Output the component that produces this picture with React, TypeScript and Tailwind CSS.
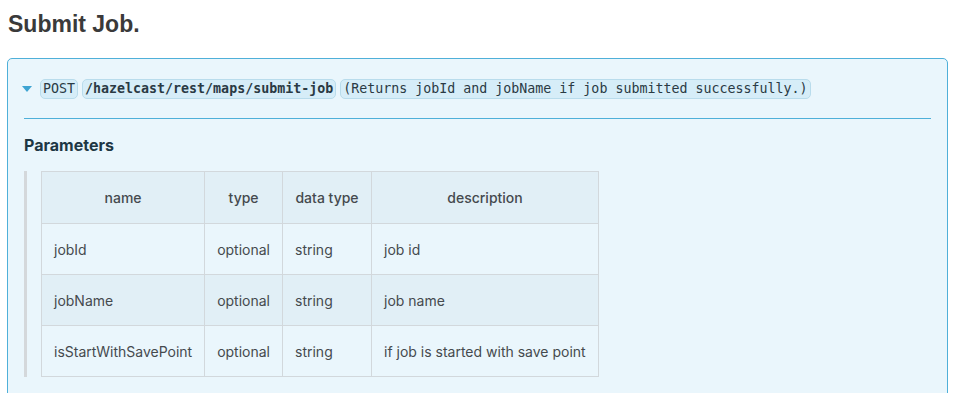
import React from "react";

const ROWS = [
  { name: "jobId", type: "optional", dataType: "string", description: "job id" },
  { name: "jobName", type: "optional", dataType: "string", description: "job name" },
  { name: "isStartWithSavePoint", type: "optional", dataType: "string", description: "if job is started with save point" },
];

function Code({ children, bold = false }: { children: React.ReactNode; bold?: boolean }) {
  return (
    <code
      className={`inline-block rounded-[5px] border border-[#b9dcec] bg-[#d6edf8] px-[2px] text-[13.3px] leading-[18px] text-[#2a3a44] ${bold ? "font-bold" : ""}`}
      style={{ fontFamily: '"DejaVu Sans Mono", monospace' }}
    >
      {children}
    </code>
  );
}

export default function App() {
  return (
    <div className="h-[393px] overflow-hidden bg-white px-[7px] pt-[9px]" style={{ fontFamily: "Inter, sans-serif" }}>
      <h2 className="pl-[1px] text-[23px] font-bold leading-[30px] text-[#3a3a3a]" style={{ fontFamily: '"Liberation Sans", Arial, sans-serif' }}>
        Submit Job.
      </h2>

      <div className="mt-[19px] w-[941px] rounded-[5px] border border-[#4fb0d9] bg-[#eaf6fc] px-4 pb-6">
        {/* summary */}
        <div className="flex items-center gap-[4px] border-b border-[#4fb0d9] pb-[19px] pt-[20px]">
          <svg width="10" height="7" viewBox="0 0 10 7" className="ml-[-2px] mr-[4px]">
            <path d="M0 0 L10 0 L5 6 Z" fill="#3ea4d2" />
          </svg>
          <Code>POST</Code>
          <Code bold>/hazelcast/rest/maps/submit-job</Code>
          <Code>(Returns jobId and jobName if job submitted successfully.)</Code>
        </div>

        <h3 className="mt-[16px] text-[16px] font-bold leading-[20px] text-[#1e3744]">Parameters</h3>

        <div className="mt-[16px] border-l-[3px] border-[#d4d8db] pl-[14px]">
          <table className="border-collapse text-[14px] text-[#454a4e]">
            <thead>
              <tr className="h-[52px] bg-[#e1eff6]">
                <th className="w-[163px] border border-[#d2d8dc] font-medium">name</th>
                <th className="w-[76px] border border-[#d2d8dc] font-medium">type</th>
                <th className="w-[89px] border border-[#d2d8dc] font-medium">data type</th>
                <th className="w-[227px] border border-[#d2d8dc] font-medium">description</th>
              </tr>
            </thead>
            <tbody>
              {ROWS.map((r, i) => (
                <tr key={r.name} className={`h-[51px] ${i % 2 === 1 ? "bg-[#e1eff6]" : "bg-[#eaf6fc]"}`}>
                  <td className="border border-[#d2d8dc] px-3">{r.name}</td>
                  <td className="border border-[#d2d8dc] px-3">{r.type}</td>
                  <td className="border border-[#d2d8dc] px-3">{r.dataType}</td>
                  <td className="border border-[#d2d8dc] px-3">{r.description}</td>
                </tr>
              ))}
            </tbody>
          </table>
        </div>
      </div>
    </div>
  );
}
